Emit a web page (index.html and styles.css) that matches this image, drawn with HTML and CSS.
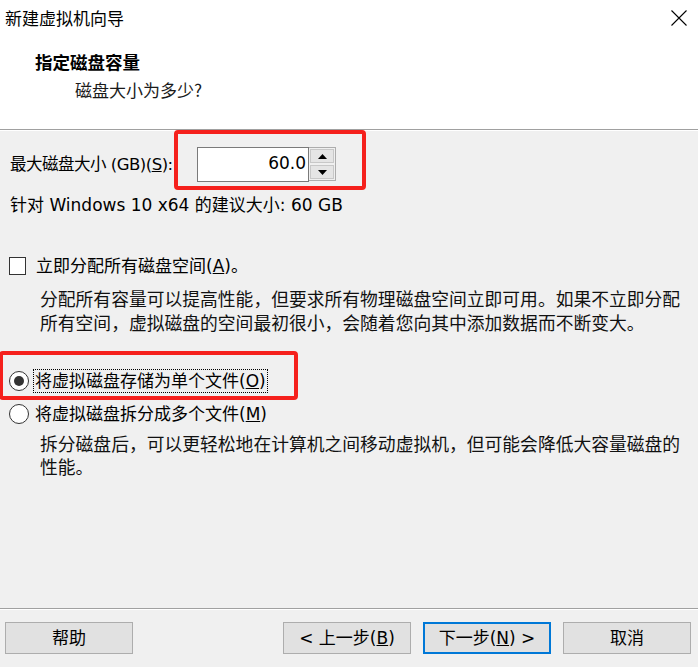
FILE: index.html
```html
<!DOCTYPE html>
<html lang="zh">
<head>
<meta charset="utf-8">
<link rel="stylesheet" href="styles.css">
</head>
<body>
<div class="window">
  <div class="header">
    <div class="titlebar">
      <span class="title">新建虚拟机向导</span>
      <svg class="close" width="16" height="16" viewBox="0 0 16 16"><path d="M0.5 0.5 L15.5 15.5 M15.5 0.5 L0.5 15.5" stroke="#000" stroke-width="1.1" fill="none"/></svg>
    </div>
    <div class="heading">指定磁盘容量</div>
    <div class="sub">磁盘大小为多少?</div>
  </div>

  <div class="content">
    <div class="size-row">
      <span class="label">最大磁盘大小 (GB)(<u>S</u>):</span>
      <div class="spin">
        <div class="spin-input">60.0</div>
        <div class="spin-btns">
          <div class="spin-btn"><svg width="9" height="5" viewBox="0 0 9 5"><path d="M4.5 0 L9 5 L0 5 Z" fill="#000"/></svg></div>
          <div class="spin-btn"><svg width="9" height="5" viewBox="0 0 9 5"><path d="M0 0 L9 0 L4.5 5 Z" fill="#000"/></svg></div>
        </div>
      </div>
    </div>
    <div class="recommend">针对 Windows 10 x64 的建议大小: 60 GB</div>

    <div class="option check-row">
      <span class="checkbox"></span>
      <span class="opt-label">立即分配所有磁盘空间(<u>A</u>)。</span>
    </div>
    <div class="desc desc-1">分配所有容量可以提高性能，但要求所有物理磁盘空间立即可用。如果不立即分配所有空间，虚拟磁盘的空间最初很小，会随着您向其中添加数据而不断变大。</div>

    <div class="option radio-row-1">
      <span class="radio checked"></span>
      <span class="opt-label focus">将虚拟磁盘存储为单个文件(<u>O</u>)</span>
    </div>
    <div class="option radio-row-2">
      <span class="radio"></span>
      <span class="opt-label">将虚拟磁盘拆分成多个文件(<u>M</u>)</span>
    </div>
    <div class="desc desc-2">拆分磁盘后，可以更轻松地在计算机之间移动虚拟机，但可能会降低大容量磁盘的性能。</div>
  </div>

  <div class="footer">
    <button class="btn">帮助</button>
    <div class="btn-group">
      <button class="btn">&lt; 上一步(<u>B</u>)</button>
      <button class="btn primary">下一步(<u>N</u>) &gt;</button>
      <button class="btn">取消</button>
    </div>
  </div>

  <div class="mark mark-size"></div>
  <div class="mark mark-radio"></div>
</div>
</body>
</html>
```

FILE: styles.css
```css
* { box-sizing: border-box; }
html, body { margin: 0; padding: 0; }
body {
  width: 698px;
  height: 667px;
  background: #f0f0f0;
  font-family: "DejaVu Sans", "Noto Sans CJK SC", sans-serif;
  color: #000;
  overflow: hidden;
}
.window {
  position: relative;
  width: 698px;
  height: 667px;
  display: flex;
  flex-direction: column;
}
.header {
  background: #fff;
  height: 130px;
  border-bottom: 1px solid #a0a0a0;
  box-shadow: 0 1px 0 #fff;
}
.titlebar {
  height: 36px;
  display: flex;
  align-items: center;
  justify-content: space-between;
  padding: 0 11px 0 5px;
}
.title {
  font-family: "Noto Sans CJK SC", sans-serif;
  font-size: 17px;
  line-height: 36px;
}
.close { margin-top: -1px; }
.heading {
  margin-top: 14px;
  padding-left: 35px;
  font-family: "Noto Sans CJK SC", sans-serif;
  font-weight: bold;
  font-size: 17.5px;
  line-height: 24px;
}
.sub {
  margin-top: 4px;
  padding-left: 75px;
  font-family: "Noto Sans CJK SC", sans-serif;
  font-size: 17px;
  line-height: 24px;
  color: #1a1a1a;
}
.content {
  flex: 1;
  padding-top: 17px;
  font-size: 17px;
}
.size-row {
  display: flex;
  align-items: center;
  height: 35px;
  padding-left: 10px;
}
.label {
  flex: none;
  width: 187px;
  white-space: nowrap;
  font-size: 16.5px;
  letter-spacing: -0.5px;
  line-height: 24px;
}
.spin {
  flex: none;
  display: flex;
  height: 35px;
}
.spin-input {
  width: 112px;
  height: 35px;
  background: #fff;
  border: 1px solid #7a7a7a;
  text-align: right;
  padding-right: 2px;
  line-height: 31px;
  font-size: 17px;
}
.spin-btns {
  width: 27px;
  display: flex;
  flex-direction: column;
  border: 1px solid #adadad;
  border-left: none;
  height: 34px;
  background: #f0f0f0;
}
.spin-btn {
  flex: 1;
  margin: 1px;
  background: #e5e5e5;
  border: 1px solid #c8c8c8;
  display: flex;
  align-items: center;
  justify-content: center;
}
.recommend {
  margin-top: 11px;
  padding-left: 10px;
  line-height: 24px;
}
.option {
  display: flex;
  align-items: center;
  height: 24px;
  padding-left: 9px;
}
.check-row { margin-top: 37px; }
.checkbox {
  width: 17px;
  height: 18px;
  border: 1px solid #333;
  background: #fff;
  margin-right: 8px;
}
.opt-label {
  font-size: 17px;
  line-height: 22px;
  padding: 0 1px;
  border: 1px dotted transparent;
}
.opt-label.focus { border-color: #000; }
.radio {
  width: 20px;
  height: 20px;
  border: 1px solid #333;
  border-radius: 50%;
  background: #fff;
  margin-right: 4px;
  display: flex;
  align-items: center;
  justify-content: center;
}
.radio.checked::after {
  content: "";
  width: 10px;
  height: 10px;
  border-radius: 50%;
  background: #333;
}
.desc {
  padding-left: 40px;
  padding-right: 8px;
  font-family: "Noto Sans CJK SC", sans-serif;
  font-size: 17.8px;
  line-height: 24px;
  color: #111;
}
.desc-1 { margin-top: 8px; }
.radio-row-1 { margin-top: 35px; }
.radio-row-2 { margin-top: 9px; }
.desc-2 { margin-top: 6px; line-height: 23px; }
.footer {
  height: 59px;
  border-top: 1px solid #a0a0a0;
  box-shadow: inset 0 1px 0 #fff;
  display: flex;
  justify-content: space-between;
  padding: 13px 7px 0 5px;
}
.btn-group {
  display: flex;
  gap: 12px;
}
.btn {
  width: 128px;
  height: 32px;
  background: #e1e1e1;
  border: 1px solid #adadad;
  font-family: "DejaVu Sans", "Noto Sans CJK SC", sans-serif;
  font-size: 17px;
  color: #000;
  padding: 0;
  line-height: 28px;
}
.btn.primary {
  border: 2px solid #0078d7;
}
.mark {
  position: absolute;
  border: 4px solid #f5201c;
  border-radius: 4px;
}
.mark-size {
  left: 174px;
  top: 130px;
  width: 192px;
  height: 60px;
}
.mark-radio {
  left: -1px;
  top: 351px;
  width: 299px;
  height: 49px;
}
```
